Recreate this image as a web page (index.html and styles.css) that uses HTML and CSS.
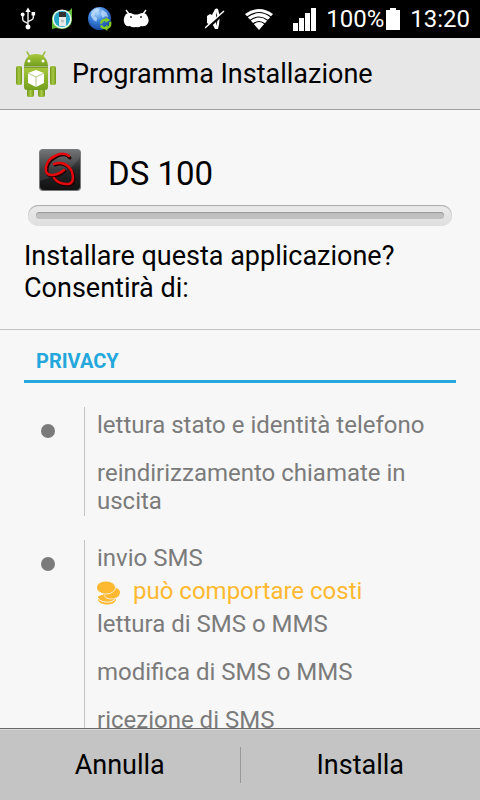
FILE: index.html
```html
<!DOCTYPE html>
<html lang="it">
<head>
<meta charset="utf-8">
<meta name="viewport" content="width=device-width, initial-scale=1">
<title>Programma Installazione</title>
<link rel="stylesheet" href="styles.css">
</head>
<body>
<div class="status">
  <div class="status-notes">
    <svg width="16" height="24" viewBox="0 0 18 26" fill="none" stroke="#eee" stroke-width="1.6"><path d="M9 3v18M3 9v4q0 2 2 3l4 2M15 8v3q0 2-2 3l-4 2"/><g fill="#fff" stroke="none"><path d="M9 0l3 5H6zM13 5h4v4h-4z"/><circle cx="3" cy="8" r="2.2"/><circle cx="9" cy="22" r="2.8"/></g></svg>
    <svg width="22" height="22" viewBox="0 0 22 22"><path d="M1 21V9Q3 2 11 2l7 1 3-3v13q-2 8-10 8l-6-1z" fill="#63bd38"/><circle cx="11" cy="11" r="9.500" fill="#eaf8f5"/><circle cx="11" cy="11" r="8" fill="#26a7c5"/><rect x="8" y="4" width="7" height="14" rx="1" fill="#e8e8e8"/><path d="M8 4h7v5H8z" fill="#333"/><circle cx="11.500" cy="13" r="1.500" fill="#bbb"/></svg>
    <svg width="24" height="24" viewBox="0 0 26 26"><defs><radialGradient id="globe" cx=".4" cy=".25" r=".8"><stop offset="0" stop-color="#a9d7ff"/><stop offset=".45" stop-color="#3d83dc"/><stop offset="1" stop-color="#123f9b"/></radialGradient></defs><circle cx="12.500" cy="12.500" r="12.500" fill="url(#globe)"/><path d="M4 5l5-4 4 1-2 3-3 1-1 4 3 2-1 4-3-2-3-5zM15 3l5 3 2 5-3-1-3 2-2-4z" fill="#cbe6fc" opacity=".7"/><path d="M14 18q1-5 6-4M24 16q1 6-4 7M19 23q-4 0-5-3" fill="none" stroke="#82cf22" stroke-width="2.400"/><path d="M19 11l5 3-5 3zM21 19l-4 4 4 3z" fill="#82cf22"/></svg>
    <svg width="26" height="20" viewBox="0 0 26 20"><path d="M3 1l3 4M23 1l-3 4" stroke="#fff" stroke-width="1.400"/><path d="M3 5q4-2 7 0 3 1 6 0 4-2 7 0 4 5 2 9-2 4-7 3-2 2-5 1-4 1-6-1-5 1-6-4-1-4 2-8z" fill="#fff"/><circle cx="8" cy="8" r="1" fill="#222"/><circle cx="18" cy="8" r="1" fill="#222"/></svg>
  </div>
  <div class="status-signals">
    <svg width="20" height="22" viewBox="0 0 20 22"><path d="M2 8l3-2 2 1 3-6q2-1 3 0 3 9 0 20h-3l-3-6-2 2-3-2z" fill="#fff"/><path d="M11 4q3 7 0 14z" fill="#222"/><path d="M1 21L20 4" stroke="#000" stroke-width="3"/><path d="M0 20L19 3" stroke="#fff" stroke-width="1.500"/></svg>
    <svg class="wifi" width="28" height="21" viewBox="0 0 28 21"><path d="M0 5Q14-5 28 5L14 21z" fill="#fff"/><path d="M2 8q12-9 24 0M5 11.500q9-7 18 0M8 15q6-5 12 0" fill="none" stroke="#000" stroke-width="1.200"/></svg>
    <svg class="bars" width="23" height="23" viewBox="0 0 23 23" fill="#fff"><path d="M0 15h5v8H0zM6 10h5v13H6zM12 5h5v18h-5zM18 0h5v23h-5z"/></svg>
    <span class="charge">100%</span>
    <svg class="battery" width="14" height="22" viewBox="0 0 14 22" fill="#fff"><path d="M0 2h4V0h6v2h4v20H0z"/></svg>
    <time>13:20</time>
  </div>
</div>

<header class="app-bar">
  <svg width="42" height="48" viewBox="0 0 42 48"><defs><linearGradient id="body" x2="0" y2="1"><stop stop-color="#a7c83b"/><stop offset="1" stop-color="#749f1e"/></linearGradient><linearGradient id="limb"><stop stop-color="#75971d"/><stop offset=".5" stop-color="#a9ca43"/><stop offset="1" stop-color="#73951a"/></linearGradient></defs><path d="M12 2l3 5M30 2l-3 5" stroke="#9bbb45" stroke-width="1.500" stroke-linecap="round"/><path d="M9 16Q10 4 21 4t12 12z" fill="url(#body)"/><circle cx="14" cy="11" r="1.500" fill="#fff"/><circle cx="28" cy="11" r="1.500" fill="#fff"/><g fill="url(#limb)"><rect x="1" y="16" width="6" height="19" rx="2"/><rect x="35" y="16" width="6" height="19" rx="2"/><rect x="12" y="33" width="7" height="14" rx="2"/><rect x="23" y="33" width="7" height="14" rx="2"/></g><path d="M9 17h24v20q0 3-3 3H12q-3 0-3-3z" fill="url(#body)"/><path d="M9 17h24" stroke="#5d7d18"/><path d="M21 20l8 3v10l-8 4-8-4V23z" fill="#fff"/><path d="M13 23l8 4 8-4M21 27v10" fill="none" stroke="#b5c98a" stroke-width="1"/></svg>
  <h1>Programma Installazione</h1>
</header>

<main>
  <section class="summary">
    <div class="app">
      <svg width="42" height="42" viewBox="0 0 42 42"><defs><linearGradient id="tile" x2="0" y2="1"><stop stop-color="#626466"/><stop offset=".5" stop-color="#252628"/><stop offset="1" stop-color="#111"/></linearGradient></defs><rect width="42" height="42" rx="4" fill="#77797b"/><rect x="1" y="1" width="40" height="40" rx="4" fill="url(#tile)"/><path d="M1 5q0-4 4-4h32q4 0 4 4v2Q36 22 1 32z" fill="#fff" opacity=".1"/><g fill="none" stroke-linecap="round" stroke-linejoin="round"><path d="M31 9C28 5 22 5 17 8 10 11 7 18 8 23c1 6 11 5 18-1M16 16c8-3 15 2 18 9 2 7 1 11-5 11-5 0-10-2-13-6" stroke="#200" stroke-width="3"/><path d="M30 7C27 4 21 4 16 7 9 10 6 17 7 22c1 6 11 5 18-1M15 15c8-3 15 1 18 8 2 7 1 12-5 12-5 0-10-2-13-6" stroke="#e3090c" stroke-width="2.500"/></g></svg>
      <h2>DS 100</h2>
    </div>
    <div class="track"></div>
    <p class="question">Installare questa applicazione? Consentirà di:</p>
  </section>

  <section class="permissions">
    <h3>Privacy</h3>
    <div class="group">
      <ul>
        <li>lettura stato e identità telefono</li>
        <li>reindirizzamento chiamate in uscita</li>
      </ul>
    </div>
    <div class="group">
      <ul>
        <li>invio SMS
          <div class="cost"><svg width="24" height="24" viewBox="0 0 24 24" fill="#ffb931"><path d="M1 16c0-3 18-3 18 0v3c-2 6-16 6-18 0z"/><path d="M1 17c2 5 15 6 18 0" fill="none" stroke="#f7f7f7"/><path d="M5 10h18v3c-1 5-9 6-14 4z" stroke="#f7f7f7" stroke-width=".8"/><ellipse cx="14" cy="11" rx="9" ry="5"/><ellipse cx="9" cy="6.500" rx="9.500" ry="6.500" stroke="#f7f7f7" stroke-width=".8"/></svg>può comportare costi</div>
        </li>
        <li>lettura di SMS o MMS</li>
        <li>modifica di SMS o MMS</li>
        <li>ricezione di SMS</li>
      </ul>
    </div>
  </section>
</main>

<footer>
  <button type="button">Annulla</button>
  <button type="button">Installa</button>
</footer>
</body>
</html>
```
FILE: styles.css
```css
* { box-sizing: border-box; }

body {
  margin: 0;
  height: 100vh;
  display: flex;
  flex-direction: column;
  overflow: hidden;
  background: #f7f7f7;
  color: #000;
  font-family: Roboto, "Liberation Sans", sans-serif;
}

h1, h2, h3, p, ul { margin: 0; padding: 0; }
h1, h2 { font-weight: 400; }
svg { flex: none; display: block; }

.status {
  flex: none;
  height: 38px;
  padding: 0 10px 0 20px;
  display: flex;
  align-items: center;
  justify-content: space-between;
  background: #000;
  color: #fff;
  font-size: 24px;
}

.status-notes { display: flex; align-items: center; gap: 15px; }
.status-notes svg:last-child { margin-left: -4px; }
.status-signals { display: flex; align-items: center; }
.wifi { margin-left: 20px; }
.bars { margin: 0 10px 0 20px; }
.battery { margin: 0 10px 0 2px; }

.app-bar {
  flex: none;
  height: 72px;
  padding: 0 15px;
  display: flex;
  align-items: center;
  gap: 15px;
  background: #e7e7e7;
  border-bottom: 1px solid #a0a0a0;
}

.app-bar h1 { font-size: 27px; }

main { flex: 1; min-height: 0; overflow: hidden; }

.summary {
  padding: 39px 24px 25px;
  border-bottom: 1px solid #c4c4c4;
}

.app { display: flex; align-items: flex-start; gap: 27px; padding-left: 15px; }
.app h2 { font-size: 33px; line-height: 42px; padding-top: 4px; }

.track {
  height: 21px;
  margin: 10px 4px 14px;
  padding: 7px 8px;
  border-radius: 10px;
  background: linear-gradient(#ebebeb, #dedede);
  box-shadow: inset 0 1px 1px #a8a8a8;
}

.track::before {
  content: "";
  display: block;
  height: 7px;
  border-radius: 4px;
  background: #c0c0c0;
  box-shadow: inset 0 1px 1px #979797;
}

.question { font-size: 27px; line-height: 32px; }

.permissions { padding: 0 24px; }

.permissions h3 {
  height: 53px;
  padding: 10px 12px 0;
  border-bottom: 3px solid #24a7dc;
  color: #24a7dc;
  font-size: 20px;
  line-height: 42px;
  text-transform: uppercase;
}

.group {
  display: flex;
  margin-top: 24px;
  color: #7b7b7b;
  font-size: 24px;
  line-height: 28px;
}

.group::before {
  content: "";
  width: 14px;
  height: 14px;
  margin: 17px 29px 0 17px;
  border-radius: 50%;
  background: #7b7b7b;
}

.group ul {
  flex: 1;
  padding: 4px 0 1px 12px;
  border-left: 1px solid #c4c4c4;
  list-style: none;
}

.group li + li { margin-top: 20px; }
.group li:has(.cost) + li { margin-top: 5px; }

.cost {
  display: flex;
  align-items: center;
  gap: 12px;
  margin-top: 5px;
  color: #ffb931;
}

.cost svg { margin-top: 4px; }

footer {
  flex: none;
  height: 72px;
  display: flex;
  align-items: center;
  background: #c4c4c4;
  border-top: 1px solid #696969;
  box-shadow: inset 0 1px #d9d9d9;
}

button {
  flex: 1;
  height: 36px;
  padding: 0;
  border: 0;
  background: none;
  color: #000;
  font: inherit;
  font-size: 27px;
}

button:first-child { border-right: 1px solid #999; }
```
